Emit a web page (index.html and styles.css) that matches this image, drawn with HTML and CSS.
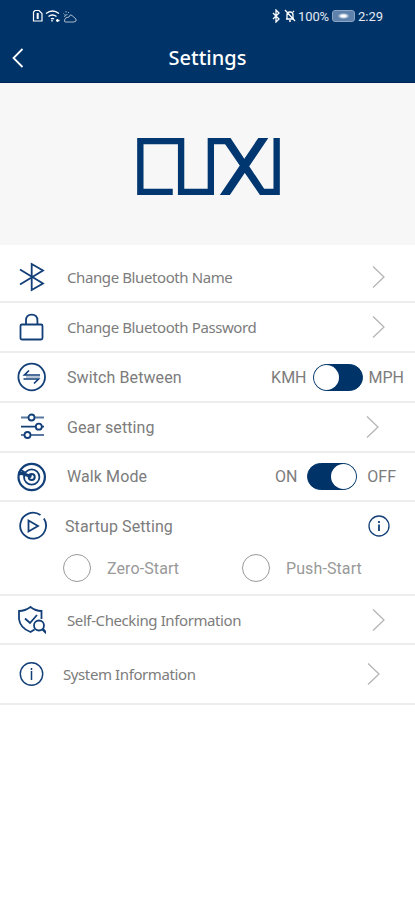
FILE: index.html
```html
<!DOCTYPE html>
<html lang="en">
<head>
  <meta charset="UTF-8" />
  <meta name="viewport" content="width=device-width, initial-scale=1">
  <title>Settings</title>
  <link rel="stylesheet" href="styles.css">
</head>
<body>

<header class="header">
  <div class="status">
    <svg class="status-left" width="46" height="16" viewBox="0 0 46 16">
      <path d="M4 2.500h4l3 3v7.500H2.500V4z" stroke-width="1.2"/>
      <path d="M6.700 5v6" stroke-width="2"/>
      <path d="M15 5.500q6.500-5 13 0 M17.500 8.500q4-3 8 0 M20 11q1.500-1 3 0 M21 12v1.500 M25 12.500h3.500 M26.500 11v3" stroke-width="1.400"/>
      <path d="M34 14h9q3-.5 2-3l-4-3.500q-2-2-3 1.500-4 0-4.500 3 0 2 .5 2z M32.500 5.500l1 1 M35 3v1.500 M38 4l-1 1 M33.500 9q0-2.500 3-2.500" stroke-width="1" opacity=".65"/>
    </svg>
    <div class="status-right">
      <svg width="8" height="14" viewBox="0 0 8 14"><path d="M1 4l6 6-3 3V1l3 3-6 6" stroke-width="1.300"/></svg>
      <svg class="mute" width="12" height="14" viewBox="0 0 12 14"><path d="M1 1l10 11 M2 10h8 M3 10V6q0-3 3-3 3 0 3 3v4 M5 12h2 M9 3l1-1" stroke-width="1.300"/></svg>
      <span class="percent">100%</span>
      <span class="battery"></span>
      <span class="clock">2:29</span>
    </div>
  </div>
  <div class="title-bar">
    <svg class="back" width="12" height="20" viewBox="0 0 12 20"><path d="M10.500 1L1.500 10l9 9" stroke-width="1.800"/></svg>
    <h1>Settings</h1>
  </div>
</header>

<div class="brand">
  <svg width="143" height="57" viewBox="52 54 428 168" preserveAspectRatio="none">
    <path d="M159 213H62V63H184V213H273V63H320 M420 213H470V54" stroke-width="19"/>
    <path d="M303 54H332L433 204V222H420z M300 222L415 54H445L330 222z" class="fill"/>
  </svg>
</div>

<ul class="list">
  <li class="row first">
    <svg class="icon" width="30" height="30" viewBox="0 0 30 30"><path d="M4 7.500L27 21.500 15.700 28V2L27 8.500 4 22.500"/></svg>
    <span class="label noto">Change Bluetooth Name</span>
    <svg class="chevron" width="13" height="24" viewBox="0 0 13 24"><path d="M1 1.500L12 12 1 22.500"/></svg>
  </li>
  <li class="row">
    <svg class="icon" width="30" height="30" viewBox="0 0 30 30"><rect x="4.500" y="12.500" width="22" height="15" rx="1.500"/><path d="M10 12V8.500q0-5.800 5.700-5.800t5.700 5.800V12"/></svg>
    <span class="label noto">Change Bluetooth Password</span>
    <svg class="chevron" width="13" height="24" viewBox="0 0 13 24"><path d="M1 1.500L12 12 1 22.500"/></svg>
  </li>
  <li class="row">
    <svg class="icon" width="30" height="30" viewBox="0 0 30 30"><circle cx="15.700" cy="15" r="13.300"/><path d="M24 13H8.500L13 8.500 M7.500 17h15L18 21.500" stroke-width="1.700"/><path d="M10 15h14" stroke-width="1" opacity=".6"/></svg>
    <span class="label">Switch Between</span>
    <span class="opt">KMH</span>
    <span class="toggle"></span>
    <span class="opt mph">MPH</span>
  </li>
  <li class="row">
    <svg class="icon" width="30" height="30" viewBox="0 0 30 30"><path d="M5 14.700h15 M26 14.700h2"/><path d="M5 5.500h7 M18.500 5.500H28 M5 23h3 M14.500 23H28" opacity=".7"/><circle cx="15.500" cy="5.500" r="3"/><circle cx="22.800" cy="14.700" r="3"/><circle cx="11.500" cy="23" r="3"/></svg>
    <span class="label">Gear setting</span>
    <svg class="chevron near" width="13" height="24" viewBox="0 0 13 24"><path d="M1 1.500L12 12 1 22.500"/></svg>
  </li>
  <li class="row walk">
    <svg class="icon" width="30" height="30" viewBox="0 0 30 30"><circle cx="15.700" cy="15" r="13.200" stroke-width="2.200"/><circle cx="15.700" cy="15" r="7.700" stroke-width="1.800"/><circle cx="15.700" cy="15" r="3" stroke-width="2"/><path d="M2.500 10.500l13 4" stroke-width="3"/><path d="M4 7.500l4 2.500-5 3" stroke-width="2"/></svg>
    <span class="label">Walk Mode</span>
    <span class="opt">ON</span>
    <span class="toggle right"></span>
    <span class="opt off">OFF</span>
  </li>
  <li class="group">
    <div class="line">
      <svg class="icon play" width="30" height="30" viewBox="0 0 30 30"><path d="M22.500 4.100a12.900 12.900 0 1 0 3.400 3.500"/><path d="M10.500 9.500v11l9.500-5.500z"/></svg>
      <span class="label">Startup Setting</span>
      <svg class="info" width="22" height="22" viewBox="0 0 22 22"><circle cx="11" cy="11" r="10"/><path d="M11 9.500v6.500 M11 6v2" stroke-width="1.800"/></svg>
    </div>
    <div class="radios">
      <span class="radio"></span>
      <span class="choice zero">Zero-Start</span>
      <span class="radio"></span>
      <span class="choice">Push-Start</span>
    </div>
  </li>
  <li class="row check">
    <svg class="icon" width="30" height="30" viewBox="0 0 30 30"><path d="M25.500 14V6q-6 0-11-4Q9 6 3 6v8q1 9 11.500 13l4-2.500"/><path d="M9 13.500l5 4.500 7-8"/><circle cx="23" cy="20.500" r="5"/><path d="M26.500 24l4 4" stroke-width="2.500"/></svg>
    <span class="label noto">Self-Checking Information</span>
    <svg class="chevron" width="13" height="24" viewBox="0 0 13 24"><path d="M1 1.500L12 12 1 22.500"/></svg>
  </li>
  <li class="row last">
    <svg class="icon" width="30" height="30" viewBox="0 0 30 30"><circle cx="15.500" cy="15" r="11.200" stroke-width="1.400"/><path d="M15.500 12v9 M15.500 9v2" stroke-width="1.500"/></svg>
    <span class="label noto">System Information</span>
    <svg class="chevron middle" width="13" height="24" viewBox="0 0 13 24"><path d="M1 1.500L12 12 1 22.500"/></svg>
  </li>
</ul>

</body>
</html>
```
FILE: styles.css
```css
* {
  box-sizing: border-box;
}
body {
  margin: 0;
  background: #fff;
  color: #7c7c7c;
  font-family: Roboto, sans-serif;
}
svg {
  display: block;
  flex: none;
  fill: none;
  stroke: #fff;
}
.header {
  height: 83px;
  background: #003469;
  color: #fff;
  border-bottom: 1px solid #002257;
}
.status {
  display: flex;
  justify-content: space-between;
  align-items: center;
  height: 32px;
  padding: 0 32px 0 31px;
}
.status-right {
  display: flex;
  align-items: center;
  font-size: 13px;
  color: #e3eaf3;
}
.mute {
  margin: 0 2px 0 4px;
}
.percent {
  width: 32px;
  letter-spacing: -0.1px;
}
.battery {
  width: 23px;
  height: 12px;
  margin: 0 3px 0 2px;
  border: 1px solid #8aa5c5;
  border-radius: 3px;
  background: radial-gradient(ellipse 6px 3px, #fff 35%, #5f82ac 100%);
}
.clock {
  width: 25px;
}
.title-bar {
  display: flex;
  align-items: center;
  height: 51px;
  padding: 0 12px;
}
.title-bar h1 {
  flex: 1;
  margin: 0 12px 0 0;
  font: 500 20px "Noto Sans", sans-serif;
  text-align: center;
}
.brand {
  display: flex;
  justify-content: center;
  height: 162px;
  padding: 55px 0 0 2px;
  background: #f7f7f7;
}
.brand svg {
  stroke: #003770;
}
.brand .fill {
  fill: #003770;
  stroke: none;
}
.list {
  margin: 0;
  padding: 0;
  list-style: none;
}
.row {
  display: flex;
  align-items: center;
  height: 50px;
  border-bottom: 2px solid #ededed;
}
.first {
  height: 58px;
  padding-top: 7px;
}
.walk,
.check {
  height: 49px;
}
.last {
  height: 60px;
}
.icon {
  margin: 0 21px 0 16px;
  stroke: #123f78;
  stroke-width: 1.8;
}
.label {
  margin-right: auto;
  font-size: 16px;
  letter-spacing: 0.1px;
  white-space: nowrap;
}
.noto {
  font-family: "Noto Sans", sans-serif;
  font-size: 15px;
  letter-spacing: -0.4px;
}
.chevron {
  margin-right: 30px;
  stroke: #b5b5b5;
  stroke-width: 1.3;
}
.near {
  margin-right: 36px;
}
.middle {
  margin-right: 35px;
}
.opt {
  font-size: 16px;
}
.toggle {
  width: 50px;
  height: 27px;
  margin: 0 6px;
  border: 1px solid #003469;
  border-radius: 14px;
  background: #003469;
}
.toggle::before {
  content: "";
  display: block;
  width: 25px;
  height: 25px;
  border-radius: 50%;
  background: #fff;
}
.right {
  margin: 0 10px;
}
.right::before {
  margin-left: auto;
}
.mph {
  margin-right: 11px;
}
.off {
  margin-right: 19px;
}
.group {
  height: 94px;
  border-bottom: 2px solid #ededed;
}
.line {
  display: flex;
  align-items: center;
  height: 48px;
}
.play {
  margin: 0 17px 0 18px;
}
.info {
  margin-right: 25px;
  stroke: #123f78;
  stroke-width: 1.3;
}
.radios {
  display: flex;
  align-items: center;
  height: 36px;
  padding-left: 63px;
  color: #999;
}
.radio {
  width: 28px;
  height: 28px;
  border: 1px solid #999;
  border-radius: 50%;
}
.choice {
  padding-left: 16px;
  font-size: 16px;
  letter-spacing: 0.1px;
  white-space: nowrap;
}
.zero {
  width: 151px;
}
.last .icon {
  margin-right: 17px;
}
```
